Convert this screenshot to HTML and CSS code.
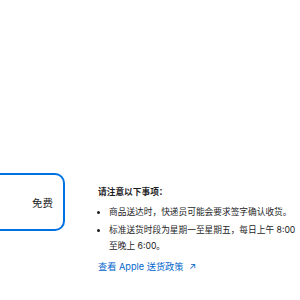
FILE: index.html
```html
<!DOCTYPE html>
<html lang="zh-CN">
  <head>
    <meta charset="utf-8" />
    <meta name="viewport" content="width=device-width" />
    <title>送货选项</title>
    <link rel="stylesheet" href="styles.css">
  </head>
  <body>
    <div class="delivery">
      <div class="option">
        <span class="price">免费</span>
      </div>

      <div class="notes">
        <h3>请注意以下事项：</h3>
        <ul>
          <li>商品送达时，快递员可能会要求签字确认收货。</li>
          <li>标准送货时段为星期一至星期五，每日上午 8:00 至晚上 6:00。</li>
        </ul>
        <a class="policy" href="#">查看 Apple 送货政策 <span class="arrow">↗</span></a>
      </div>
    </div>
  </body>
</html>
```

FILE: styles.css
```css
html {
  font-family: Inter, "Noto Sans CJK SC", sans-serif;
}

body {
  margin: 0;
  background: #fff;
  color: #1d1d1f;
}

.delivery {
  display: flex;
  align-items: flex-start;
  gap: 33px;
  padding-top: 173px;
}

.option {
  display: flex;
  align-items: center;
  justify-content: flex-end;
  box-sizing: border-box;
  width: 125px;
  height: 58px;
  margin-left: -60px;
  padding-right: 10px;
  border: 2px solid #0071e3;
  border-radius: 10px;
}

.price {
  font-size: 10.5px;
}

.notes {
  width: 200px;
  font-size: 8.7px;
  line-height: 16.5px;
}

.notes h3 {
  margin: 11px 0 4px;
  font-size: 8.7px;
  font-weight: 600;
  line-height: 16px;
}

.notes ul {
  margin: 0;
  padding: 0 0 0 11px;
}

.notes li {
  margin-bottom: 1px;
}

.policy {
  display: inline-block;
  margin-top: 3px;
  font-size: 9.2px;
  color: #0066cc;
  text-decoration: none;
}

.arrow {
  margin-left: 3px;
}
```
